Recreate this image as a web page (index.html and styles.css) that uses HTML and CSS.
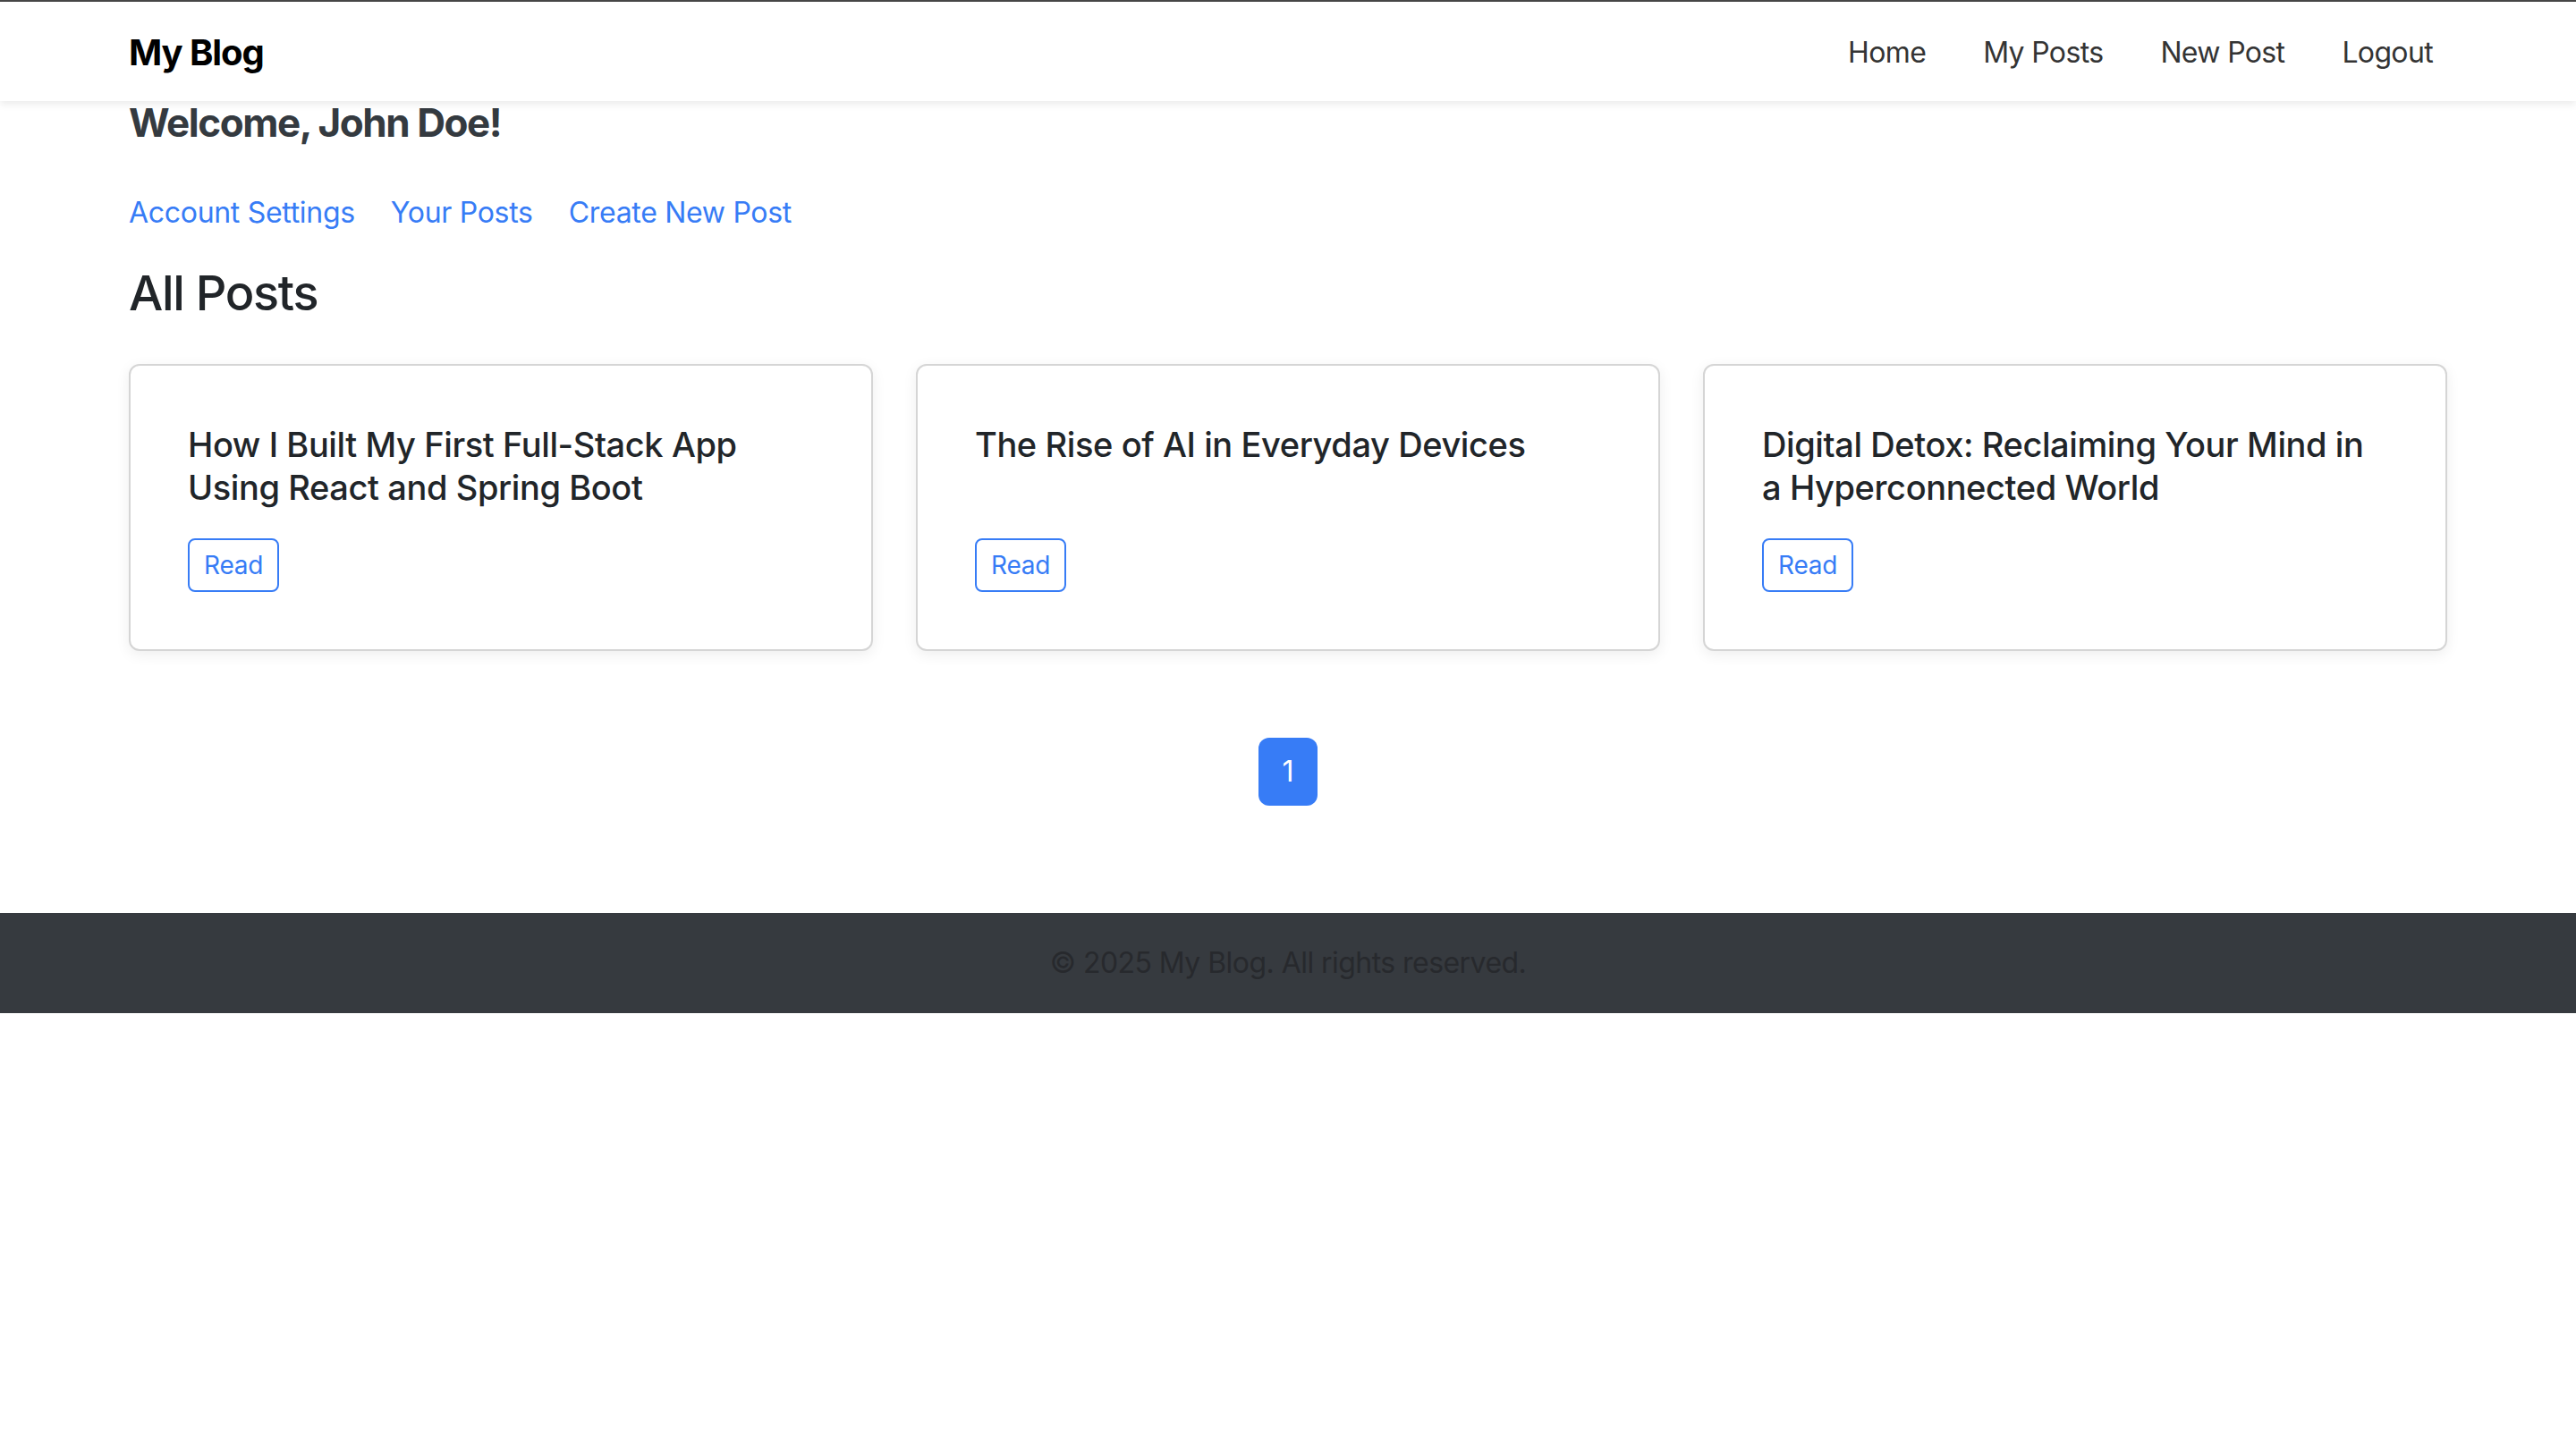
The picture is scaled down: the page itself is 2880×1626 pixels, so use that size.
FILE: index.html
```html
<!DOCTYPE html>
<html lang="en">
<head>
<meta charset="utf-8">
<title>My Blog</title>
<link rel="stylesheet" href="styles.css">
</head>
<body>
<nav class="navbar">
  <div class="container nav-inner">
    <a class="brand" href="#">My Blog</a>
    <ul class="nav-links">
      <li><a href="#">Home</a></li>
      <li><a href="#">My Posts</a></li>
      <li><a href="#">New Post</a></li>
      <li><a href="#">Logout</a></li>
    </ul>
  </div>
</nav>
<main class="container main">
  <h4 class="welcome">Welcome, John Doe!</h4>
  <div class="quick-links">
    <a href="#">Account Settings</a>
    <a href="#">Your Posts</a>
    <a href="#">Create New Post</a>
  </div>
  <h3 class="section-title">All Posts</h3>
  <div class="posts-grid">
    <div class="card">
      <h5 class="card-title">How I Built My First Full-Stack App Using React and Spring Boot</h5>
      <a class="btn-read" href="#">Read</a>
    </div>
    <div class="card">
      <h5 class="card-title">The Rise of AI in Everyday Devices</h5>
      <a class="btn-read" href="#">Read</a>
    </div>
    <div class="card">
      <h5 class="card-title">Digital Detox: Reclaiming Your Mind in a Hyperconnected World</h5>
      <a class="btn-read" href="#">Read</a>
    </div>
  </div>
  <div class="pagination">
    <a class="page active" href="#">1</a>
  </div>
</main>
<footer class="footer">
  <p>© 2025 My Blog. All rights reserved.</p>
</footer>
</body>
</html>
```
FILE: styles.css
```css
* { box-sizing: border-box; }
html, body { margin: 0; padding: 0; background: #fff; }
body {
  font-family: Inter, "Liberation Sans", sans-serif;
  color: #212529;
  font-size: 32px;
}
a { text-decoration: none; }

.container {
  max-width: 2640px;
  margin: 0 auto;
  padding: 0 24px;
}

.navbar {
  height: 113px;
  border-top: 2px solid #464646;
  background: #fff;
  box-shadow: 0 4px 8px rgba(0, 0, 0, 0.075);
  position: relative;
  z-index: 2;
}
.nav-inner {
  height: 100%;
  display: flex;
  align-items: center;
  justify-content: space-between;
  padding-top: 3px;
}
.brand {
  font-size: 40px;
  font-weight: 700;
  color: #000;
  line-height: 48px;
  letter-spacing: -1.1px;
}
.nav-links {
  list-style: none;
  margin: 0;
  padding: 0;
  display: flex;
  gap: 32px;
}
.nav-links a {
  display: block;
  padding: 8px 16px;
  line-height: 48px;
  font-size: 32px;
  color: #343434;
  letter-spacing: -0.65px;
}

.main { padding-bottom: 120px; }

.welcome {
  margin: 0 0 53px;
  font-size: 44px;
  line-height: 48px;
  font-weight: 700;
  color: #343a40;
  letter-spacing: -1.45px;
}
.quick-links {
  display: flex;
  gap: 40px;
  line-height: 48px;
  margin-bottom: 32px;
}
.quick-links a {
  color: #377cf6;
  font-size: 32px;
  letter-spacing: -0.3px;
}
.section-title {
  margin: 0 0 46px;
  font-size: 54px;
  line-height: 67px;
  font-weight: 500;
  color: #212529;
  letter-spacing: -1.3px;
}

.posts-grid {
  display: grid;
  grid-template-columns: repeat(3, 1fr);
  column-gap: 48px;
}
.card {
  border: 2px solid #d5d5d5;
  border-radius: 12px;
  background: #fff;
  box-shadow: 0 4px 16px rgba(0, 0, 0, 0.07);
  padding: 64px;
  display: flex;
  flex-direction: column;
  align-items: flex-start;
  min-height: 321px;
}
.card-title {
  margin: 0 0 32px;
  font-size: 38px;
  line-height: 48px;
  font-weight: 500;
  color: #212529;
  letter-spacing: -0.4px;
}
.btn-read {
  margin-top: auto;
  display: inline-block;
  border: 2px solid #377cf6;
  border-radius: 8px;
  color: #377cf6;
  font-size: 28px;
  line-height: 42px;
  padding: 7px 16px;
  letter-spacing: -0.2px;
}

.pagination {
  display: flex;
  justify-content: center;
  margin-top: 97px;
}
.page {
  display: block;
  width: 66px;
  height: 76px;
  line-height: 76px;
  text-align: center;
  border-radius: 12px;
  background: #377cf6;
  color: #fff;
  font-size: 32px;
}

.footer {
  background: #363a3f;
  padding: 32px 0;
  text-align: center;
}
.footer p {
  margin: 0;
  font-size: 32px;
  line-height: 48px;
  color: #27292d;
  letter-spacing: -0.55px;
}
```
